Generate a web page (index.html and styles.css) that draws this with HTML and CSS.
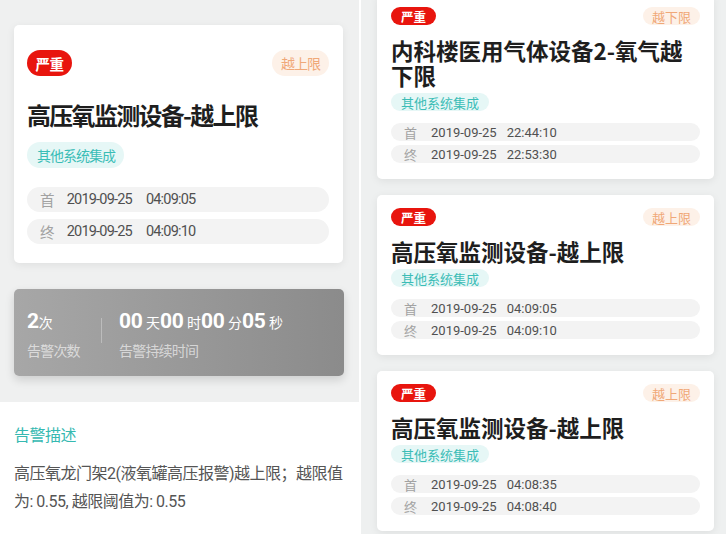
FILE: index.html
```html
<!DOCTYPE html>
<html lang="zh-CN">
<head>
<meta charset="utf-8">
<title>告警详情</title>
<link rel="stylesheet" href="styles.css">
</head>
<body>
<div class="screen">
  <section class="left">
    <div class="left-top">
      <div class="card card-lg">
        <div class="card-head">
          <span class="sev">严重</span>
          <span class="kind">越上限</span>
        </div>
        <h1 class="title">高压氧监测设备-越上限</h1>
        <span class="tag">其他系统集成</span>
        <div class="times">
          <div class="trow"><span class="tl">首</span><span class="td">2019-09-25</span><span class="tt">04:09:05</span></div>
          <div class="trow"><span class="tl">终</span><span class="td">2019-09-25</span><span class="tt">04:09:10</span></div>
        </div>
      </div>
      <div class="stats">
        <div class="stat stat-count">
          <div class="sv"><b>2</b>次</div>
          <div class="sl">告警次数</div>
        </div>
        <div class="sdiv"></div>
        <div class="stat">
          <div class="sv"><b>00</b> 天<b>00</b> 时<b>00</b> 分<b>05</b> 秒</div>
          <div class="sl">告警持续时间</div>
        </div>
      </div>
    </div>
    <div class="desc">
      <h2 class="desc-title">告警描述</h2>
      <p class="desc-text">高压氧龙门架2(液氧罐高压报警)越上限；越限值为: 0.55, 越限阈值为: 0.55</p>
    </div>
  </section>
  <section class="right">
    <div class="card card-sm first">
      <div class="card-head">
        <span class="sev">严重</span>
        <span class="kind">越下限</span>
      </div>
      <h1 class="title">内科楼医用气体设备2-氧气越下限</h1>
      <span class="tag">其他系统集成</span>
      <div class="times">
        <div class="trow"><span class="tl">首</span><span class="td">2019-09-25</span><span class="tt">22:44:10</span></div>
        <div class="trow"><span class="tl">终</span><span class="td">2019-09-25</span><span class="tt">22:53:30</span></div>
      </div>
    </div>
    <div class="card card-sm">
      <div class="card-head">
        <span class="sev">严重</span>
        <span class="kind">越上限</span>
      </div>
      <h1 class="title">高压氧监测设备-越上限</h1>
      <span class="tag">其他系统集成</span>
      <div class="times">
        <div class="trow"><span class="tl">首</span><span class="td">2019-09-25</span><span class="tt">04:09:05</span></div>
        <div class="trow"><span class="tl">终</span><span class="td">2019-09-25</span><span class="tt">04:09:10</span></div>
      </div>
    </div>
    <div class="card card-sm">
      <div class="card-head">
        <span class="sev">严重</span>
        <span class="kind">越上限</span>
      </div>
      <h1 class="title">高压氧监测设备-越上限</h1>
      <span class="tag">其他系统集成</span>
      <div class="times">
        <div class="trow"><span class="tl">首</span><span class="td">2019-09-25</span><span class="tt">04:08:35</span></div>
        <div class="trow"><span class="tl">终</span><span class="td">2019-09-25</span><span class="tt">04:08:40</span></div>
      </div>
    </div>
  </section>
</div>
</body>
</html>
```
FILE: styles.css
```css
* {
  box-sizing: border-box;
  margin: 0;
  padding: 0;
}

html,
body {
  width: 726px;
  height: 534px;
  overflow: hidden;
}

body {
  background: #ffffff;
  font-family: Roboto, "Noto Sans CJK SC", sans-serif;
  color: #333;
}

.screen {
  display: flex;
  gap: 2px;
  height: 534px;
}

/* ---------- left screen ---------- */
.left {
  width: 359px;
  flex: none;
  display: flex;
  flex-direction: column;
  background: #ffffff;
}

.left-top {
  background: #eff0f0;
  padding: 25px 15px 26px 14px;
}

/* ---------- shared card ---------- */
.card {
  background: #ffffff;
  border-radius: 5px;
  box-shadow: 0 2px 8px rgba(0, 0, 0, 0.07);
  display: flex;
  flex-direction: column;
  align-items: flex-start;
}

.card-head {
  align-self: stretch;
  display: flex;
  justify-content: space-between;
  align-items: center;
}

.sev {
  display: flex;
  align-items: center;
  justify-content: center;
  width: 45px;
  background: #e8150e;
  color: #ffffff;
  font-weight: 700;
  border-radius: 999px;
}

.kind {
  display: flex;
  align-items: center;
  background: #fdf1e8;
  color: #f0a878;
  border-radius: 999px;
}

.title {
  font-family: "Noto Sans CJK SC", sans-serif;
  font-weight: 700;
  color: #1e1e1e;
}

.tag {
  display: flex;
  align-items: center;
  background: #e6f7f6;
  color: #3bbdb6;
  border-radius: 999px;
}

.times {
  align-self: stretch;
  display: flex;
  flex-direction: column;
}

.trow {
  display: flex;
  align-items: center;
  background: #f3f3f3;
  border-radius: 999px;
  color: #505050;
}

.tl {
  color: #a2a2a2;
}

/* ---------- large card (left) ---------- */
.card-lg {
  width: 329px;
  padding: 25px 14px 19px 13px;
}

.card-lg .sev {
  height: 26px;
  font-size: 14.5px;
  letter-spacing: -0.5px;
}

.card-lg .kind {
  height: 26px;
  padding: 0 9px;
  font-size: 14px;
  letter-spacing: -1px;
}

.card-lg .title {
  margin-top: 22px;
  font-size: 24px;
  line-height: 34px;
  letter-spacing: -1.7px;
}

.card-lg .tag {
  margin-top: 10px;
  height: 26px;
  padding: 0 9px 0 10px;
  font-size: 14px;
  letter-spacing: -1px;
}

.card-lg .times {
  margin-top: 19px;
  gap: 7px;
}

.card-lg .trow {
  height: 25px;
  padding-left: 13px;
  font-size: 14.5px;
  letter-spacing: -0.8px;
}

.card-lg .tl {
  margin-right: 13px;
}

.card-lg .td {
  margin-right: 14px;
}

/* ---------- stats box ---------- */
.stats {
  margin-top: 26px;
  height: 87px;
  border-radius: 5px;
  background: linear-gradient(to right, #a7a7a7, #8b8b8b);
  box-shadow: 0 4px 10px rgba(0, 0, 0, 0.14);
  display: flex;
  align-items: flex-start;
  padding: 19px 13px 0 13px;
  color: #ffffff;
}

.stat-count {
  width: 74px;
}

.sv {
  font-size: 14px;
  line-height: 26px;
  height: 26px;
}

.sv b {
  font-size: 21px;
  font-weight: 700;
  letter-spacing: -0.3px;
}

.sl {
  margin-top: 7px;
  font-size: 14px;
  line-height: 20px;
  letter-spacing: -0.8px;
  color: rgba(255, 255, 255, 0.62);
}

.sdiv {
  width: 1px;
  height: 25px;
  margin-top: 10px;
  margin-right: 17px;
  background: rgba(255, 255, 255, 0.3);
}

/* ---------- description ---------- */
.desc {
  padding: 22px 14px 0 14px;
}

.desc-title {
  font-size: 16px;
  font-weight: 400;
  line-height: 24px;
  letter-spacing: -0.5px;
  color: #35b9b1;
}

.desc-text {
  margin-top: 12px;
  font-size: 16px;
  line-height: 28px;
  letter-spacing: -0.5px;
  color: #555555;
}

/* ---------- right screen ---------- */
.right {
  flex: 1;
  background: #eef0f0;
  padding-left: 16px;
  overflow: hidden;
  display: flex;
  flex-direction: column;
  gap: 16px;
}

.card-sm {
  width: 337px;
  flex: none;
  padding: 13px 14px 16px 14px;
}

.card-sm.first {
  margin-top: -6px;
}

.card-sm .sev {
  height: 18px;
  font-size: 12.5px;
}

.card-sm .kind {
  height: 18px;
  padding: 0 9px;
  font-size: 13px;
}

.card-sm .title {
  margin-top: 13px;
  font-size: 22.5px;
  line-height: 25px;
}

.card-sm .tag {
  margin-top: 5px;
  height: 18px;
  padding: 0 10px;
  font-size: 13px;
}

.card-sm .times {
  margin-top: 12px;
  gap: 4px;
}

.card-sm .trow {
  height: 18px;
  padding-left: 13px;
  font-size: 13px;
}

.card-sm .tl {
  margin-right: 14px;
}

.card-sm .td {
  margin-right: 10px;
}
```
